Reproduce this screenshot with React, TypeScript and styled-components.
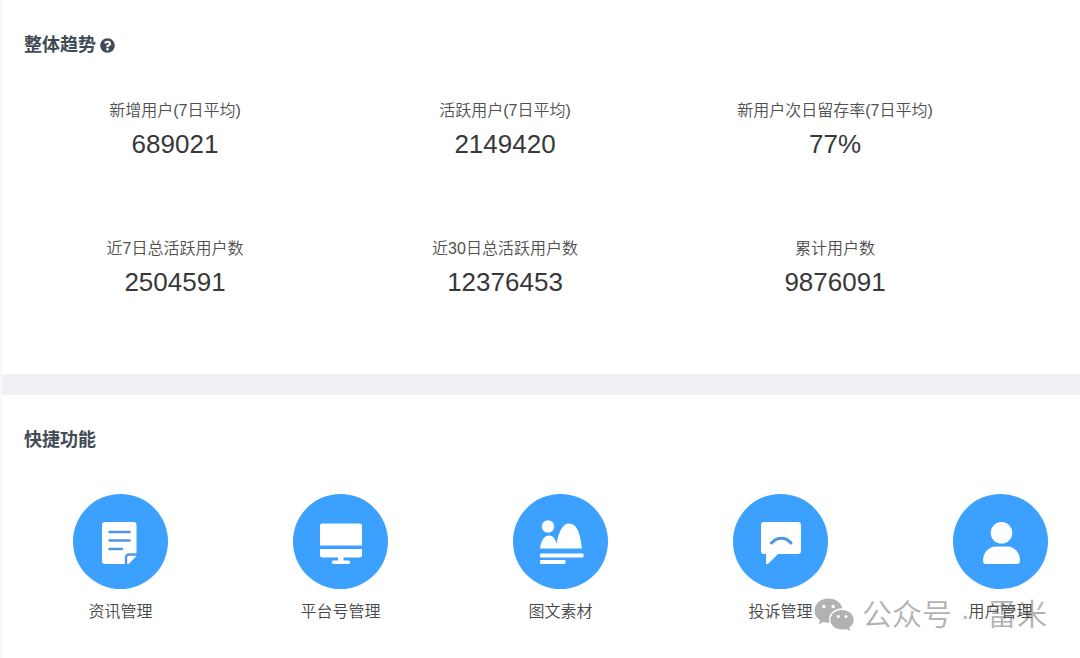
import React from "react";
import styled, { createGlobalStyle } from "styled-components";
import { FaQuestionCircle } from "react-icons/fa";

const GlobalStyle = createGlobalStyle`
  * { box-sizing: border-box; }
  body {
    margin: 0;
    background: #fff;
    color: #404040;
    font-family: "Liberation Sans", "Noto Sans CJK SC", sans-serif;
  }
`;

const Page = styled.main`
  position: relative;
  border-left: 2px solid #f8f8fb;
  min-height: 100vh;
  overflow: hidden;
`;

const Panel = styled.section`
  background: #fff;
  padding: 33px 0 0;
  & + & {
    border-top: 21px solid #f0f0f6;
  }
`;

const PanelTitle = styled.h2`
  display: flex;
  align-items: center;
  gap: 4px;
  margin: 0;
  padding: 0 22px;
  font-size: 18px;
  line-height: 24px;
  font-weight: 700;
  color: #414b55;
`;

const HelpButton = styled.button`
  display: flex;
  padding: 0;
  border: 0;
  background: none;
  color: inherit;
  font-size: 15px;
`;

const Metrics = styled.dl`
  display: grid;
  grid-template-columns: repeat(3, 1fr);
  row-gap: 76px;
  margin: 0;
  padding: 42px 80px 75px 8px;
`;

const Metric = styled.div`
  text-align: center;
`;

const MetricLabel = styled.dt`
  font-size: 16px;
  line-height: 24px;
  font-weight: 350;
  color: #505050;
`;

const MetricValue = styled.dd`
  margin: 4px 0 0;
  font-size: 26px;
  line-height: 34px;
  color: #383838;
`;

const Shortcuts = styled.nav`
  display: flex;
  justify-content: space-between;
  padding: 42px 32px 34px 71px;
`;

const Shortcut = styled.button`
  position: relative;
  z-index: 1;
  display: flex;
  flex-direction: column;
  align-items: center;
  gap: 11px;
  width: 95px;
  padding: 0;
  border: 0;
  background: none;
  color: #484848;
  font-family: inherit;
  font-size: 16px;
  line-height: 24px;
  font-weight: 350;
  white-space: nowrap;
  cursor: pointer;
`;

const Disc = styled.svg`
  display: block;
  width: 95px;
  height: 95px;
  border-radius: 50%;
  background: #3ca0ff;
`;

const Watermark = styled.div`
  position: absolute;
  right: 33px;
  bottom: 23px;
  display: flex;
  align-items: center;
  gap: 8px;
  color: #b2b2b2;
  font-size: 30px;
  line-height: 40px;
  font-weight: 350;
  white-space: pre;
`;

const WatermarkLogo = styled.svg`
  width: 40px;
  height: 34px;
`;

const metrics = [
  ["新增用户(7日平均)", "689021"],
  ["活跃用户(7日平均)", "2149420"],
  ["新用户次日留存率(7日平均)", "77%"],
  ["近7日总活跃用户数", "2504591"],
  ["近30日总活跃用户数", "12376453"],
  ["累计用户数", "9876091"],
];

const shortcuts: { label: string; art: React.ReactNode }[] = [
  {
    label: "资讯管理",
    art: (
      <>
        <path d="M32 28H60.500a3 3 0 0 1 3 3V62L55.500 70H32a3 3 0 0 1-3-3V31a3 3 0 0 1 3-3Z" />
        <path
          d="M36.500 38H56.500M36.500 46.500H56.500M36.500 55H49"
          stroke="#4f98df"
          strokeWidth="2.500"
          strokeLinecap="round"
        />
        <path
          d="M53 71V63.500a3 3 0 0 1 3-3H64.500"
          fill="none"
          stroke="#4f98df"
          strokeWidth="2.400"
        />
      </>
    ),
  },
  {
    label: "平台号管理",
    art: (
      <>
        <path d="M29 29.500H67a2 2 0 0 1 2 2V51.500H27V31.500a2 2 0 0 1 2-2Z" />
        <path d="M27 55H69V61a2.500 2.500 0 0 1-2.500 2.500H50.500V66.500H55.500a1.700 1.700 0 0 1 0 3.500H40.500a1.700 1.700 0 0 1 0-3.500H45V63.500H29.500A2.500 2.500 0 0 1 27 61Z" />
      </>
    ),
  },
  {
    label: "图文素材",
    art: (
      <>
        <circle cx="35" cy="32.500" r="6.200" />
        <path d="M27 54.500C28 46 32 41.500 36 41.500C40 41.500 42 44.500 43.500 49.500C46 37 50 29.500 56 29.500C63.500 29.500 67 38 69 54.500Z" />
        <rect x="27" y="59.500" width="43.500" height="4" rx="1" />
        <rect x="27" y="66" width="25.500" height="4" rx="1" />
      </>
    ),
  },
  {
    label: "投诉管理",
    art: (
      <>
        <path d="M31 28H65a3 3 0 0 1 3 3V57a3 3 0 0 1-3 3H45L35.500 69.500C34.300 70.600 33 70 33 68.500V60H31a3 3 0 0 1-3-3V31a3 3 0 0 1 3-3Z" />
        <path
          d="M38.500 49C44 42.500 52.500 42.500 58 49"
          fill="none"
          stroke="#4f98df"
          strokeWidth="3"
          strokeLinecap="round"
        />
      </>
    ),
  },
  {
    label: "用户管理",
    art: (
      <>
        <circle cx="48.500" cy="38.800" r="10.800" />
        <path d="M43 52.500H54C61.500 52.500 67 59 67 66.500C67 69 66 70 64 70H33C31 70 30 69 30 66.500C30 59 35.500 52.500 43 52.500Z" />
      </>
    ),
  },
];

export default function App() {
  return (
    <>
      <GlobalStyle />
      <Page>
        <Panel>
          <PanelTitle>
            整体趋势
            <HelpButton type="button" aria-label="说明">
              <FaQuestionCircle />
            </HelpButton>
          </PanelTitle>
          <Metrics>
            {metrics.map(([label, value]) => (
              <Metric key={label}>
                <MetricLabel>{label}</MetricLabel>
                <MetricValue>{value}</MetricValue>
              </Metric>
            ))}
          </Metrics>
        </Panel>
        <Panel>
          <PanelTitle>快捷功能</PanelTitle>
          <Shortcuts>
            {shortcuts.map(({ label, art }) => (
              <Shortcut key={label} type="button">
                <Disc viewBox="0 0 95 95" fill="#fff" aria-hidden="true">
                  {art}
                </Disc>
                {label}
              </Shortcut>
            ))}
          </Shortcuts>
        </Panel>
        <Watermark>
          <WatermarkLogo viewBox="0 0 40 34" fill="currentColor" aria-hidden="true">
            <path d="M14.500 0.500C6.500 0.500 0.500 6 0.500 12.800C0.500 16.800 2.600 20 6 22.300L4.800 26.300L9.500 24C11.500 24.600 13.500 24.900 15.500 24.800C13 17 19.500 10.500 28.500 10.300C27 4.500 21.500 0.500 14.500 0.500Z" />
            <path d="M28 12C21.500 12 16.300 16.300 16.300 21.800C16.300 27.300 21.500 31.600 28 31.600C29.500 31.600 31 31.300 32.300 30.900L36.300 33L35.300 29.500C38 27.700 39.700 25 39.700 21.800C39.700 16.300 34.500 12 28 12Z" />
            <g fill="#fff">
              <circle cx="9.800" cy="8.500" r="1.800" />
              <circle cx="19.200" cy="8.500" r="1.800" />
              <circle cx="24.300" cy="18.600" r="1.500" />
              <circle cx="32" cy="18.600" r="1.500" />
            </g>
          </WatermarkLogo>
          <span>{"公众号 ·  雷米"}</span>
        </Watermark>
      </Page>
    </>
  );
}
